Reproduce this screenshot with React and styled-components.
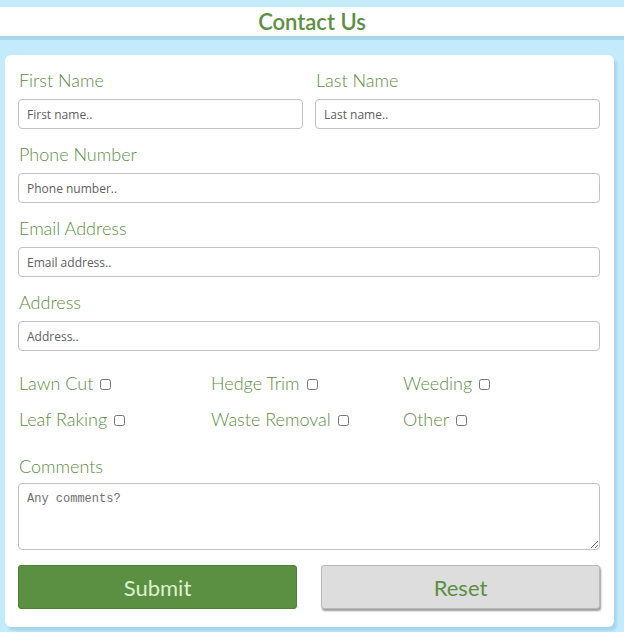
import React from "react";
import styled, { createGlobalStyle } from "styled-components";

const GlobalStyle = createGlobalStyle`
  html, body {
    margin: 0;
    padding: 0;
    background: #c4ebfd;
    font-family: Lato, "Open Sans", sans-serif;
  }
  * { box-sizing: border-box; }
`;

const green = "#5b8f42";

const services = [
  "Lawn Cut",
  "Hedge Trim",
  "Weeding",
  "Leaf Raking",
  "Waste Removal",
  "Other",
];

const fields = [
  { label: "Phone Number", placeholder: "Phone number.." },
  { label: "Email Address", placeholder: "Email address.." },
  { label: "Address", placeholder: "Address.." },
];

export default function App() {
  return (
    <>
      <GlobalStyle />
      <Page>
        <Header>
          <Title>Contact Us</Title>
        </Header>
        <Card>
          <Row>
            <Group>
              <Label>First Name</Label>
              <Input placeholder="First name.." />
            </Group>
            <Group>
              <Label>Last Name</Label>
              <Input placeholder="Last name.." />
            </Group>
          </Row>
          {fields.map((f) => (
            <Group key={f.label}>
              <Label>{f.label}</Label>
              <Input placeholder={f.placeholder} />
            </Group>
          ))}
          <Services>
            {services.map((s) => (
              <Service key={s}>
                {s}
                <Check type="checkbox" />
              </Service>
            ))}
          </Services>
          <CommentsGroup>
            <Label>Comments</Label>
            <TextArea placeholder="Any comments?" />
          </CommentsGroup>
          <Buttons>
            <Button $primary>Submit</Button>
            <Button>Reset</Button>
          </Buttons>
        </Card>
      </Page>
    </>
  );
}

const Page = styled.div`
  padding-top: 7px;
  padding-bottom: 5px;
`;

const Header = styled.header`
  height: 29px;
  background: #fff;
  display: flex;
  align-items: center;
  justify-content: center;
  box-shadow: 0 4px 0 #a8d7ec;
`;

const Title = styled.h1`
  margin: 0;
  font-size: 22px;
  font-weight: 600;
  color: ${green};
  line-height: 29px;
`;

const Card = styled.form`
  margin: 19px 10px 0 5px;
  background: #fff;
  border-radius: 6px;
  box-shadow: 3px 4px 3px #a6d5ea;
  padding: 14px 14px 18px 13px;
  display: flex;
  flex-direction: column;
  gap: 14px;
`;

const Row = styled.div`
  display: flex;
  gap: 12px;
  & > * { flex: 1; }
`;

const Group = styled.div`
  display: flex;
  flex-direction: column;
  gap: 8px;
`;

const CommentsGroup = styled(Group)`
  gap: 6px;
  margin-top: 11px;
`;

const Label = styled.label`
  font-size: 18px;
  font-weight: 300;
  line-height: 22px;
  color: ${green};
  padding-left: 1px;
`;

const Input = styled.input`
  height: 30px;
  border: 1px solid #c2c2c2;
  border-radius: 4px;
  padding: 0 8px;
  font-family: "Open Sans", "Noto Sans", sans-serif;
  font-size: 12px;
  &::placeholder { color: #606060; }
`;

const Services = styled.div`
  margin-top: 7px;
  display: grid;
  grid-template-columns: repeat(3, 192px);
  row-gap: 14px;
  padding-left: 1px;
`;

const Service = styled.label`
  display: flex;
  align-items: center;
  font-size: 18px;
  font-weight: 300;
  line-height: 22px;
  color: ${green};
`;

const Check = styled.input`
  width: 11px;
  height: 11px;
  margin: 2px 0 0 7px;
`;

const TextArea = styled.textarea`
  height: 67px;
  border: 1px solid #c2c2c2;
  border-radius: 4px;
  padding: 8px;
  font-family: "Liberation Mono", "DejaVu Sans Mono", monospace;
  font-size: 12px;
  &::placeholder { color: #707070; }
`;

const Buttons = styled.div`
  display: flex;
  gap: 24px;
  margin-top: 1px;
`;

const Button = styled.button`
  flex: 1;
  height: 44px;
  border-radius: 3px;
  border: 1px solid ${(p) => (p.$primary ? "#4e8038" : "#b9b9b9")};
  background: ${(p) => (p.$primary ? green : "#dddddd")};
  color: ${(p) => (p.$primary ? "#dcf2cc" : green)};
  font-family: Lato, sans-serif;
  font-size: 22px;
  font-weight: 400;
  box-shadow: ${(p) => (p.$primary ? "none" : "1px 2px 2px #9a9a9a")};
`;
